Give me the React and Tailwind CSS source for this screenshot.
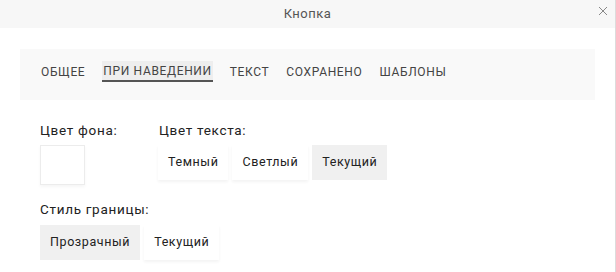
import { clsx } from 'clsx';

const tabs = ['Общее', 'При наведении', 'Текст', 'Сохранено', 'Шаблоны'];

const OptionButton = ({ label, active }) => (
  <button
    className={clsx(
      'h-[35px] px-[10px] text-[12.5px] tracking-[0.6px] text-[#222]',
      active ? 'bg-[#f0f0f0]' : 'bg-white shadow-[0_2px_3px_rgba(0,0,0,0.05)]'
    )}
  >
    {label}
  </button>
);

const App = () => {
  return (
    <div className="relative h-[272px] w-[616px] overflow-hidden border-r border-[#dcdcdc] bg-white font-['Roboto','Noto_Sans',sans-serif]">
      <div className="relative flex h-[28px] items-center justify-center bg-[#f7f7f7]">
        <span className="text-[13px] tracking-[0.5px] text-[#555]">Кнопка</span>
        <button className="absolute right-[6px] top-[5px] flex h-[12px] w-[12px] items-center justify-center text-[#888]">
          <svg width="10" height="10" viewBox="0 0 10 10" stroke="currentColor" strokeWidth="1">
            <path d="M1 1L9 9M9 1L1 9" />
          </svg>
        </button>
      </div>

      <div className="mx-[20px] mt-[21px] flex h-[51px] items-start gap-[17px] bg-[#f9f9f9] pl-[21px] pt-[12px]">
        {tabs.map((tab, i) => (
          <div
            key={tab}
            className={clsx(
              'flex h-[21px] items-center text-[12px] uppercase tracking-[0.65px] text-[#444]',
              i === 1 && 'border-b-2 border-[#555] bg-[#eeeeee] px-px'
            )}
          >
            {tab}
          </div>
        ))}
      </div>

      <div className="px-[40px] pt-[22px]">
        <div className="flex">
          <div className="w-[118px]">
            <div className="text-[13.5px] leading-[16px] tracking-[0.7px] text-[#222]">Цвет фона:</div>
            <div className="mt-[7px] h-[40px] w-[45px] border border-[#ececec] bg-white shadow-[0_2px_3px_rgba(0,0,0,0.04)]" />
          </div>
          <div>
            <div className="ml-px text-[13.5px] leading-[16px] tracking-[0.7px] text-[#222]">Цвет текста:</div>
            <div className="mt-[7px] flex gap-[4px]">
              <OptionButton label="Темный" />
              <OptionButton label="Светлый" />
              <OptionButton label="Текущий" active />
            </div>
          </div>
        </div>

        <div className="mt-[16px] text-[13.5px] leading-[16px] tracking-[0.7px] text-[#222]">Стиль границы:</div>
        <div className="mt-[8px] flex gap-[4px]">
          <OptionButton label="Прозрачный" active />
          <OptionButton label="Текущий" />
        </div>
      </div>
    </div>
  );
};

export default App;
